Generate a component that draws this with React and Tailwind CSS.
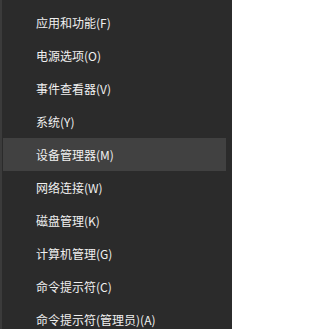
import React from 'react';

const ITEMS = [
  '应用和功能(F)',
  '电源选项(O)',
  '事件查看器(V)',
  '系统(Y)',
  '设备管理器(M)',
  '网络连接(W)',
  '磁盘管理(K)',
  '计算机管理(G)',
  '命令提示符(C)',
  '命令提示符(管理员)(A)'
];

export default function App() {
  const active = 4;

  return (
    <div
      className="w-[232px] h-[329px] overflow-hidden bg-[#2b2b2b] border-l-2 border-[#3b3b3b] pt-[6px]"
      style={{ fontFamily: '"Noto Sans CJK SC", "Noto Sans", sans-serif' }}
    >
      <ul>
        {ITEMS.map((label, i) => (
          <li
            key={label}
            className={
              'ml-px w-[223px] h-[33px] flex items-center pl-[33px] text-[12px] leading-none text-[#f0f0f0] ' +
              (i === active ? 'bg-[#414141]' : '')
            }
          >
            {label}
          </li>
        ))}
      </ul>
    </div>
  );
}
